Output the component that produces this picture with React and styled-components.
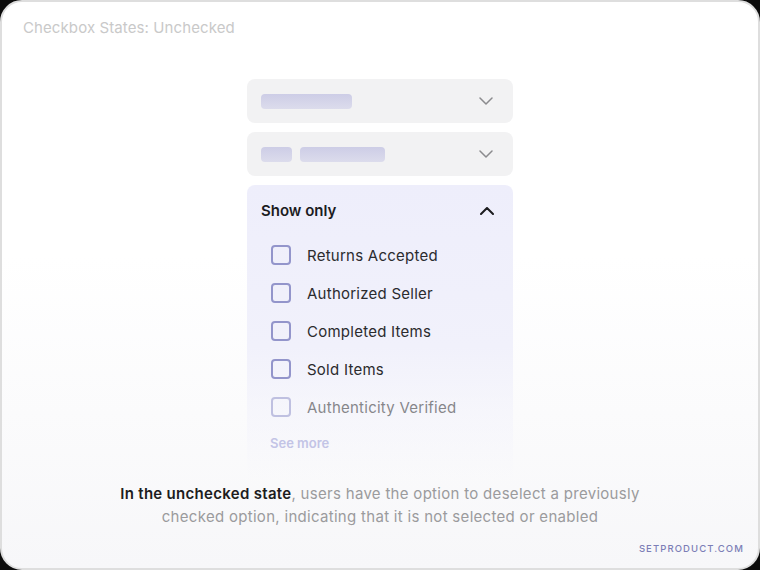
import React from "react";
import styled, { createGlobalStyle } from "styled-components";

const GlobalStyle = createGlobalStyle`
  html, body {
    margin: 0;
    padding: 0;
    background: #0c0c0c;
  }
  body {
    font-family: Inter, "Noto Sans", sans-serif;
  }
`;

const Card = styled.div`
  box-sizing: border-box;
  width: 760px;
  height: 570px;
  border: 2px solid #dedede;
  border-radius: 22px;
  background: linear-gradient(180deg, #ffffff 0%, #ffffff 45%, #f7f7f9 100%);
  display: flex;
  flex-direction: column;
  overflow: hidden;
`;

const Title = styled.div`
  padding: 16px 0 0 21px;
  font-size: 15px;
  line-height: 20px;
  color: #c9c9c9;
  letter-spacing: 0.1px;
`;

const Column = styled.div`
  width: 266px;
  margin: 41px auto 0;
  display: flex;
  flex-direction: column;
  gap: 9px;
`;

const Select = styled.div`
  height: 44px;
  border-radius: 8px;
  background: #f2f2f3;
  display: flex;
  align-items: center;
  padding: 0 20px 0 14px;
  gap: 8px;
`;

const Bar = styled.div`
  width: ${(p) => p.w}px;
  height: 15px;
  border-radius: 4px;
  background: linear-gradient(180deg, #cdcde6 0%, #dcdcec 100%);
`;

const Spacer = styled.div`
  flex: 1;
`;

const Panel = styled.div`
  border-radius: 8px 8px 0 0;
  background: linear-gradient(180deg, #eeeefb 0%, #f1f1fb 55%, rgba(248, 248, 250, 0) 100%);
  padding-bottom: 28px;
`;

const PanelHead = styled.div`
  height: 51px;
  display: flex;
  align-items: center;
  padding: 0 19px 0 14px;
  font-size: 15px;
  font-weight: 600;
  color: #1c1c1f;
`;

const Option = styled.label`
  height: 38px;
  display: flex;
  align-items: center;
  padding-left: 24px;
  gap: 16px;
  font-size: 15px;
  letter-spacing: 0.25px;
  color: #2b2b2e;
  opacity: ${(p) => (p.$faded ? 0.55 : 1)};
`;

const Box = styled.span`
  box-sizing: border-box;
  width: 20px;
  height: 20px;
  border: 2px solid #9395cb;
  border-radius: 4px;
  background: transparent;
`;

const SeeMore = styled.div`
  padding: 9px 0 0 23px;
  font-size: 13px;
  font-weight: 600;
  color: #c3c4e6;
`;

const Caption = styled.p`
  margin: 3px auto 0;
  width: 560px;
  text-align: center;
  font-size: 15px;
  line-height: 23px;
  letter-spacing: 0.3px;
  color: #9b9b9d;
`;

const Strong = styled.span`
  font-weight: 600;
  color: #1d1d20;
`;

const Muted = styled.span`
  color: #9b9b9d;
`;

const Footer = styled.div`
  margin-top: auto;
  padding: 0 14px 14px 0;
  text-align: right;
  font-size: 9.5px;
  font-weight: 500;
  letter-spacing: 1.1px;
  color: #7c7eb7;
`;

const Chevron = ({ up, color = "#8b8b8e", width = 1.5 }) => (
  <svg width="14" height="8" viewBox="0 0 14 8" fill="none">
    <path
      d={up ? "M1 7l6-6 6 6" : "M1 1l6 6 6-6"}
      stroke={color}
      strokeWidth={width}
      strokeLinecap="round"
      strokeLinejoin="round"
    />
  </svg>
);

const options = [
  { label: "Returns Accepted" },
  { label: "Authorized Seller" },
  { label: "Completed Items" },
  { label: "Sold Items" },
  { label: "Authenticity Verified", faded: true },
];

export default function App() {
  return (
    <>
      <GlobalStyle />
      <Card>
        <Title>Checkbox States: Unchecked</Title>
        <Column>
          <Select>
            <Bar w={91} />
            <Spacer />
            <Chevron />
          </Select>
          <Select>
            <Bar w={31} />
            <Bar w={85} />
            <Spacer />
            <Chevron />
          </Select>
          <Panel>
            <PanelHead>
              Show only
              <Spacer />
              <Chevron up color="#1c1c1f" width={2} />
            </PanelHead>
            {options.map((o) => (
              <Option key={o.label} $faded={o.faded}>
                <Box />
                {o.label}
              </Option>
            ))}
            <SeeMore>See more</SeeMore>
          </Panel>
        </Column>
        <Caption>
          <Strong>In the unchecked state</Strong>
          <Muted>, users have the option to deselect a previously</Muted>
          <br />
          <Muted>
            checked option, indicating that it is not selected or enabled
          </Muted>
        </Caption>
        <Footer>SETPRODUCT.COM</Footer>
      </Card>
    </>
  );
}
